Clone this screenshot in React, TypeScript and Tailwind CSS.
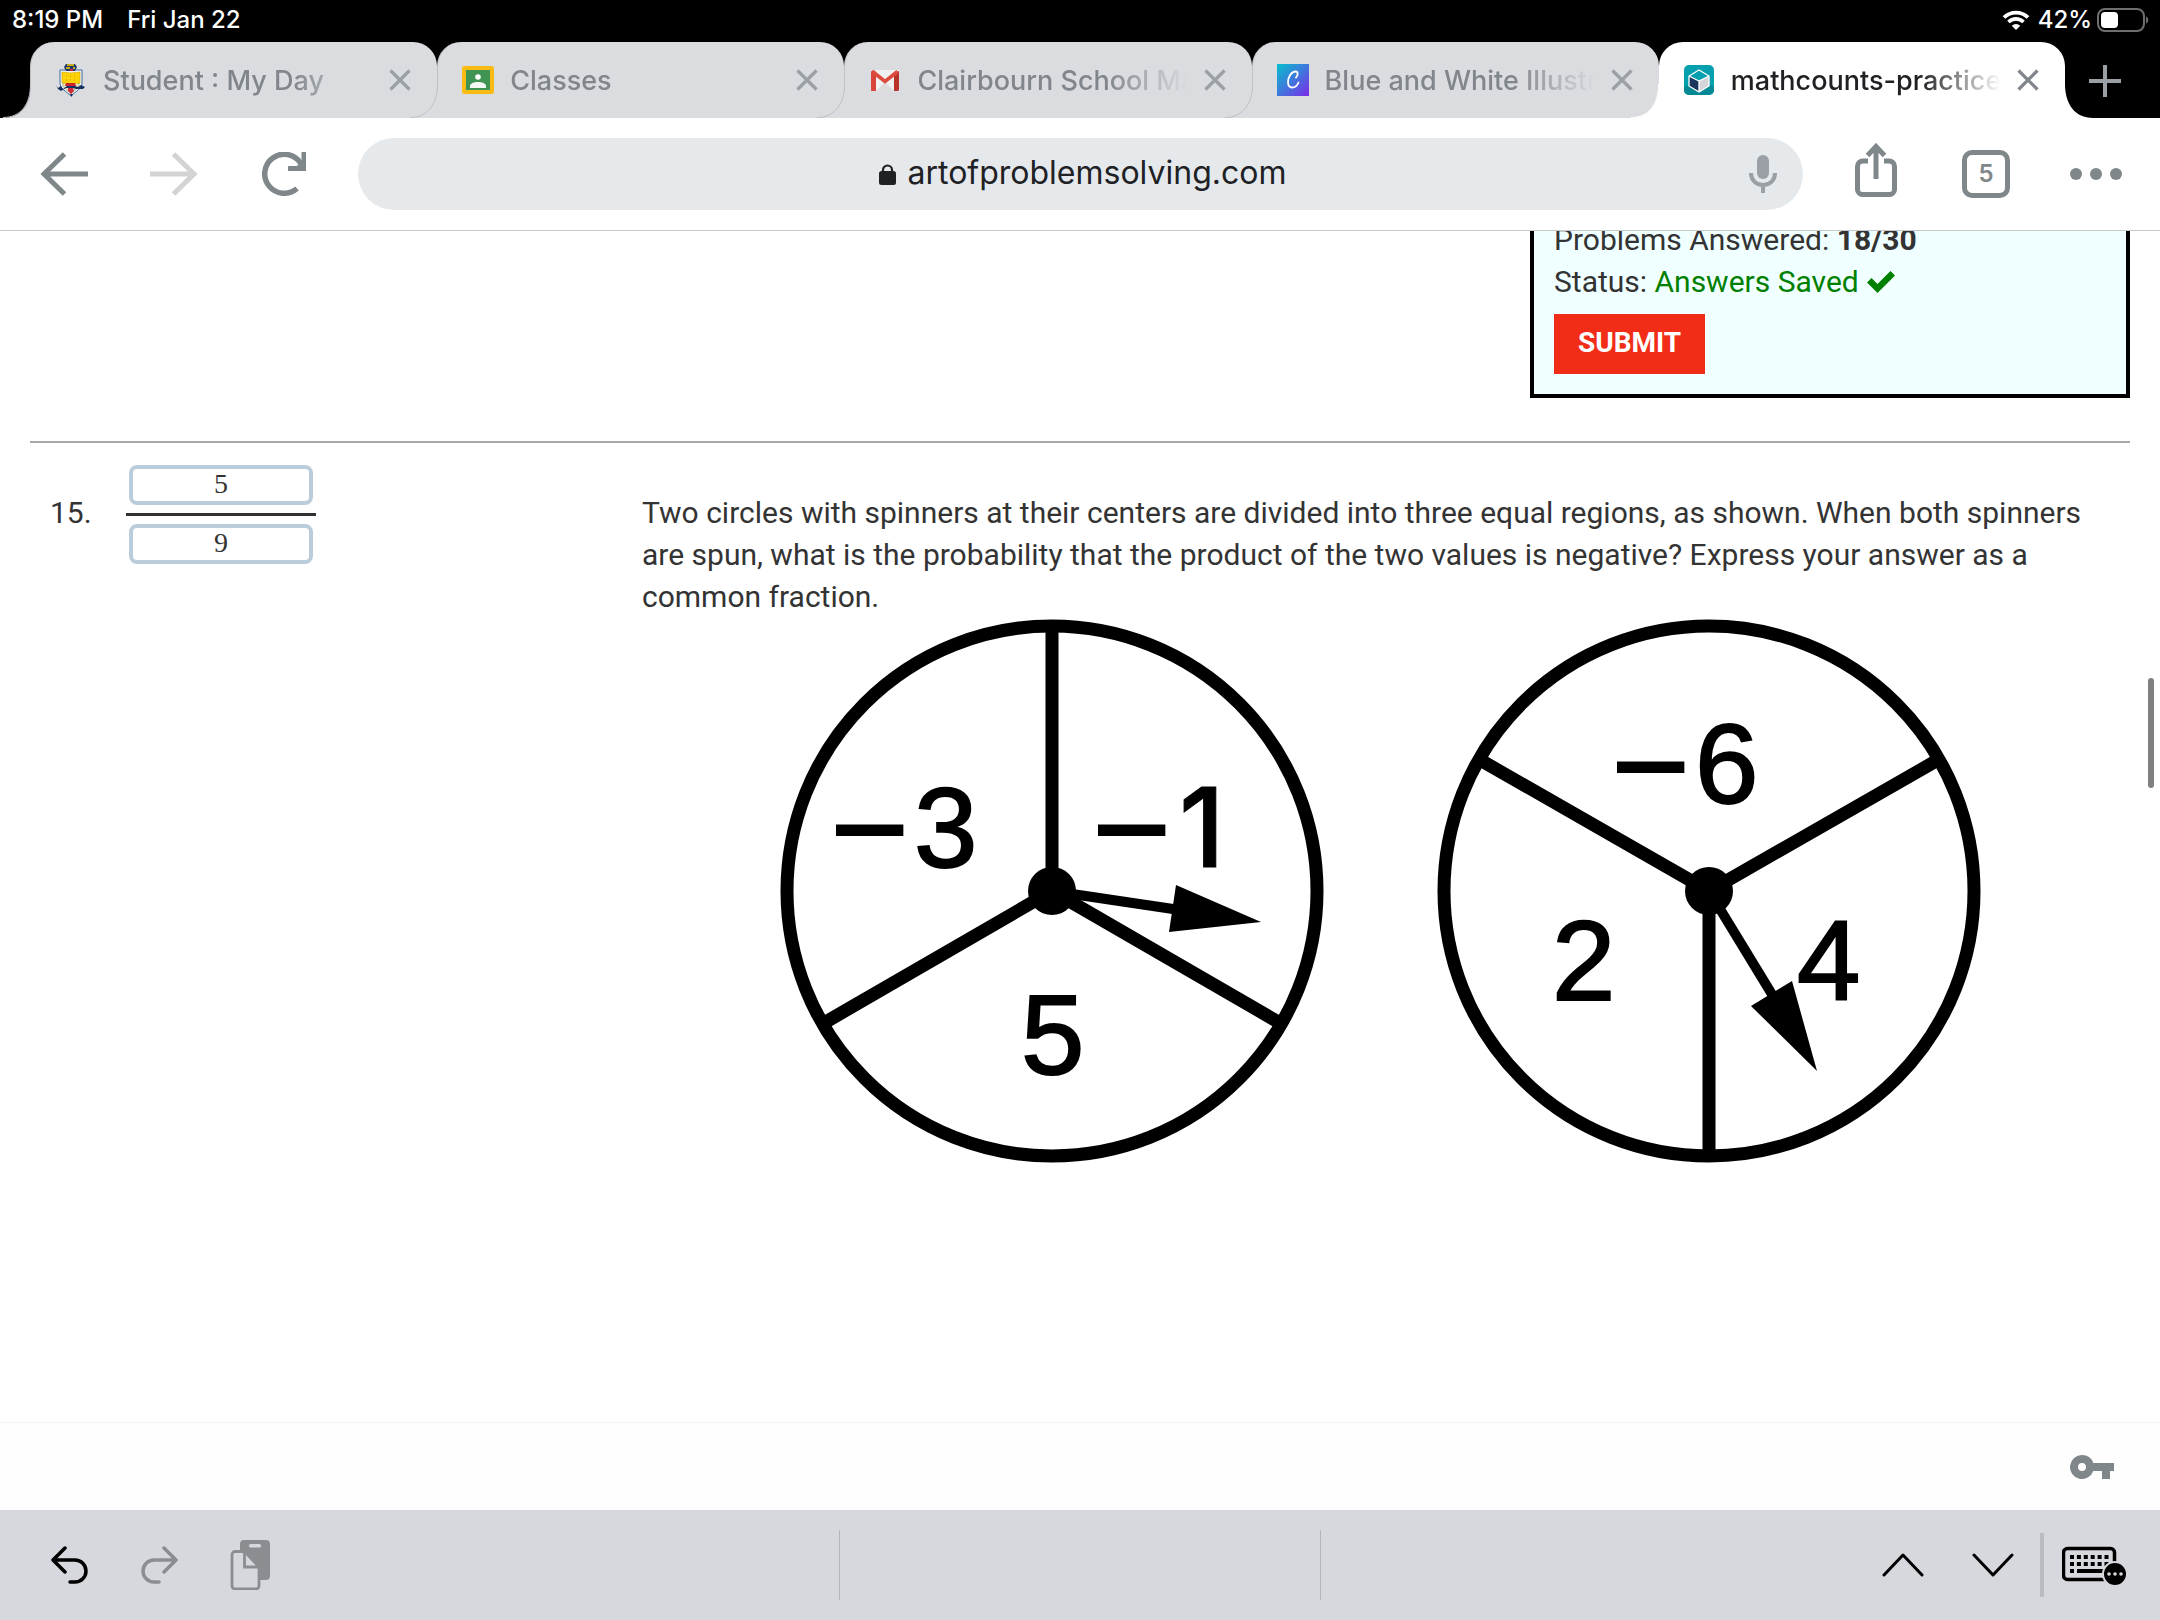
import type { ReactNode } from "react";

const ui = "font-['Inter',sans-serif]";
const body = "font-['Roboto',sans-serif]";

function CrestIcon() {
  return (
    <svg viewBox="9 8 32 34" className="h-[34px] w-8 shrink-0" aria-hidden="true">
      <path d="M14 15h22v13c0 6-6 8-11 13-5-5-11-7-11-13z" fill="#f2f4f6" stroke="#3d6a9e" />
      <path d="M17 27h16v4c-2 3-5 5-8 8-3-3-6-5-8-8z" fill="#dfe3c8" stroke="#8aa36a" strokeWidth="0.6" />
      <path d="M16 17l9 1 9-1v11l-9 1-9-1z" fill="#fcd305" stroke="#d8a100" strokeWidth="0.6" />
      <path d="M20 21h1M24 21h1M28 21h1M20 25h1M24 25h1M28 25h1" stroke="#e08a00" />
      <path d="M20 9h9l2 3-2 4h-9l-2-4z" fill="#1f3769" />
      <path d="M21 10h7M20 13h4M27 13h2" stroke="#fcd305" strokeWidth="1.4" />
      <path d="M24 14h3v2h-3z" fill="#cf2030" />
      <path d="M20 28h9l1 3H19z" fill="#cf2030" />
      <path d="M10 30l2 3 3-2 2 3 4-3h8l3 1 3-2 4 2-2 2h-7l-3-1h-7l-5 3-3-2z" fill="#16305f" />
      <path d="M22 33h5l1 3-3 3-3-3z" fill="#d42a3c" />
      <path d="M24 39h3l-1.500 3z" fill="#16305f" />
    </svg>
  );
}

function ClassroomIcon() {
  return (
    <svg viewBox="0 0 32 28" className="h-7 w-8 shrink-0" aria-hidden="true">
      <rect width="32" height="28" rx="2" fill="#f9bb14" />
      <rect x="4" y="4" width="24" height="20" fill="#3f9353" />
      <circle cx="16" cy="11" r="2.800" fill="#fff" />
      <path d="M8 22v-2c0-2.500 4-4 8-4s8 1.500 8 4v2z" fill="#f4f8f4" />
    </svg>
  );
}

function GmailIcon() {
  return (
    <svg viewBox="0 0 32 24" className="h-6 w-8 shrink-0" aria-hidden="true">
      <path d="M2 2h28v21H2z" fill="#f1f1f1" />
      <path d="M16 14l-9 9h18z" fill="#dcdcdc" />
      <path d="M4 3v20H3.500A1.500 1.500 0 0 1 2 21.500V3.500L4 2l3 2v19H2z" fill="#d9453b" />
      <path d="M25 5l5-2v18.500a1.500 1.500 0 0 1-1.500 1.500H25z" fill="#b93428" />
      <path d="M3.500 3.500L16 13.500 28.500 3.500" fill="none" stroke="#dd4b3e" strokeWidth="3.600" />
    </svg>
  );
}

function CanvaIcon() {
  return (
    <svg viewBox="0 0 32 32" className="size-8 shrink-0" aria-hidden="true">
      <defs>
        <linearGradient id="canva" x1="0" y1="0" x2="1" y2="1">
          <stop offset="0" stopColor="#06bfcb" />
          <stop offset="0.500" stopColor="#3f78dd" />
          <stop offset="1" stopColor="#7d2ae8" />
        </linearGradient>
      </defs>
      <rect width="32" height="32" fill="url(#canva)" />
      <path
        d="M19 13.500c2-2 2.500-6-.5-6-4 0-7.500 5.500-7.500 10.500 0 3.500 1.800 5.500 4.200 5.500 3 0 5.300-2.500 6.300-5"
        fill="none"
        stroke="#fff"
        strokeWidth="1.800"
        strokeLinecap="round"
      />
    </svg>
  );
}

function CubeIcon() {
  return (
    <svg viewBox="0 0 32 32" className="size-8 shrink-0" aria-hidden="true">
      <rect x="1" y="1" width="30" height="30" rx="5" fill="#04a0ae" />
      <path d="M1 23c4-2 8-3 15-3s11 1 15 3v3a5 5 0 0 1-5 5H6a5 5 0 0 1-5-5z" fill="#068994" />
      <path d="M16 6l10 6v10l-10 6-10-6V12z" fill="#04a0ae" />
      <path d="M6 12l10 5v11L6 22z" fill="#1b365d" />
      <path d="M26 12l-10 5v11l10-6z" fill="#d3d5d9" />
      <path d="M16 6l10 6v10l-10 6-10-6V12zM6 12l10 5 10-5M16 17v11" fill="none" stroke="#fff" strokeWidth="1.300" />
    </svg>
  );
}

type Tab = { title: string; icon: ReactNode; active?: boolean };

const tabs: Tab[] = [
  { title: "Student : My Day", icon: <CrestIcon /> },
  { title: "Classes", icon: <ClassroomIcon /> },
  { title: "Clairbourn School Mail", icon: <GmailIcon /> },
  { title: "Blue and White Illustrated", icon: <CanvaIcon /> },
  { title: "mathcounts-practice", icon: <CubeIcon />, active: true },
];

function BrowserTab({ title, icon, active }: Tab) {
  const fill = active ? "fill-white" : "fill-[#dadce0]";
  return (
    <div
      className={
        active
          ? "relative flex min-w-0 flex-1 items-center rounded-t-3xl bg-white pr-[26px] pl-6"
          : "relative flex min-w-0 flex-1 items-center rounded-t-3xl border-l border-[#bfc1c5] bg-[#dadce0] pr-[26px] pl-6"
      }
    >
      <svg viewBox="0 0 28 34" className="absolute right-full bottom-0 h-[34px] w-7" aria-hidden="true">
        <path d="M0 34C18 34 28 20 28 0V34z" className={fill} />
        <path d="M0 33.500C18 33.500 27.500 20 27.500 0" fill="none" stroke={active ? "#fff" : "#bfc1c5"} />
      </svg>
      {icon}
      <a
        href="#tab"
        className={
          active
            ? "ml-4 min-w-0 flex-1 overflow-hidden pt-0.5 text-[27px] leading-8 font-medium whitespace-nowrap text-[#202124] [mask-image:linear-gradient(to_right,black_70%,transparent)]"
            : "ml-4 min-w-0 flex-1 overflow-hidden pt-0.5 text-[27px] leading-8 font-medium whitespace-nowrap text-[#80868b] [mask-image:linear-gradient(to_right,black_70%,transparent)]"
        }
      >
        {title}
      </a>
      <button
        aria-label="Close tab"
        className={active ? "ml-4 shrink-0 text-[#80868b]" : "ml-4 shrink-0 text-[#9aa0a6]"}
      >
        <svg viewBox="0 0 22 22" className="size-[22px]" fill="none" stroke="currentColor" strokeWidth="3.200">
          <path d="M1.500 1.500l19 19M20.500 1.500l-19 19" />
        </svg>
      </button>
      {active && (
        <svg viewBox="0 0 28 34" className="absolute bottom-0 left-full h-[34px] w-7" aria-hidden="true">
          <path d="M28 34C10 34 0 20 0 0V34z" fill="#fff" />
        </svg>
      )}
    </div>
  );
}

function StatusBar() {
  return (
    <div className="flex h-[42px] items-center pr-2.5 pb-0.5 pl-3 text-2xl leading-8 font-medium text-white">
      <span>8:19 PM</span>
      <span className="ml-6 flex-1">Fri Jan 22</span>
      <svg viewBox="0 0 28 22" className="h-[22px] w-7" aria-label="Wi-Fi" fill="none" stroke="#fff">
        <path d="M2 8.500a17 17 0 0 1 24 0" strokeWidth="3.800" />
        <path d="M6.500 13a10.600 10.600 0 0 1 15 0" strokeWidth="3.600" />
        <path d="M14 21l-4.200-4.300a6 6 0 0 1 8.400 0z" fill="#fff" stroke="none" />
      </svg>
      <span className="ml-2">42%</span>
      <svg viewBox="0 0 54 26" className="ml-1 h-[26px] w-[54px]" aria-label="Battery">
        <rect x="2" y="2" width="46" height="22" rx="7" fill="none" stroke="#6e6e6e" strokeWidth="2" />
        <rect x="5" y="5" width="17" height="16" rx="4" fill="#fff" />
        <path d="M50 9.500c3 1 3 6 0 7z" fill="#6e6e6e" />
      </svg>
    </div>
  );
}

function Toolbar() {
  return (
    <div className="flex h-[113px] shrink-0 items-center border-b border-[#c6c8ca] bg-white pr-[38px] pl-10 text-[#7f878b]">
      <button aria-label="Back">
        <svg viewBox="0 0 48 44" className="h-11 w-12" fill="none" stroke="currentColor" strokeWidth="5">
          <path d="M48 22H4M24.500 2L4 22l20.500 20" />
        </svg>
      </button>
      <button aria-label="Forward" className="ml-[62px] text-[#d3d3d3]">
        <svg viewBox="0 0 48 44" className="h-11 w-12" fill="none" stroke="currentColor" strokeWidth="5">
          <path d="M0 22h44M23.500 2L44 22 23.500 42" />
        </svg>
      </button>
      <button aria-label="Reload" className="ml-16">
        <svg viewBox="0 0 44 44" className="size-11" fill="none" stroke="currentColor" strokeWidth="5.500">
          <path d="M35 36.500A19.500 19.500 0 1 1 38.500 11" />
          <path d="M44 0v19H26v-5h9l4.500-6V0z" fill="currentColor" stroke="none" />
        </svg>
      </button>
      <div className="ml-[52px] flex h-[72px] flex-1 items-center rounded-full bg-[#e5e9ec] pr-[26px] pl-[58px]">
        <div className="flex flex-1 items-center justify-center gap-3">
          <svg viewBox="0 0 17 21" className="h-[21px] w-[17px]" aria-hidden="true">
            <rect y="7" width="17" height="14" rx="2.500" fill="#202124" />
            <path d="M4 9V6a4.500 4.500 0 0 1 9 0v3" fill="none" stroke="#202124" strokeWidth="2.200" />
          </svg>
          <input
            aria-label="Address"
            defaultValue="artofproblemsolving.com"
            className="field-sizing-content bg-transparent pb-0.5 text-[32px] leading-10 text-[#202124] outline-none"
          />
        </div>
        <button aria-label="Voice search" className="text-[#9aa0a6]">
          <svg viewBox="0 0 28 38" className="h-[38px] w-7" fill="none" stroke="currentColor" strokeWidth="4">
            <rect x="8" width="12" height="24" rx="6" fill="currentColor" stroke="none" />
            <path d="M2 18c0 7 5 12 12 12s12-5 12-12M14 29v9" />
          </svg>
        </button>
      </div>
      <button aria-label="Share" className="ml-[52px] -mt-2">
        <svg viewBox="0 0 42 54" className="h-[54px] w-[42px]" fill="none" stroke="currentColor" strokeWidth="5">
          <path d="M13 18H8a5.500 5.500 0 0 0-5.500 5.500v23A5 5 0 0 0 7.500 51.500h27a5 5 0 0 0 5-5v-23A5.500 5.500 0 0 0 34 18h-5M21 36V4M12.500 12.500L21 3.500l8.500 9" />
        </svg>
      </button>
      <button
        aria-label="Open tabs"
        className="ml-[65px] flex size-12 items-center justify-center rounded-[10px] border-[5px] border-[#7f878b] text-2xl font-semibold"
      >
        5
      </button>
      <button aria-label="More" className="ml-[60px]">
        <svg viewBox="0 0 52 12" className="h-3 w-[52px]" fill="currentColor">
          <circle cx="6" cy="6" r="6" />
          <circle cx="26" cy="6" r="6" />
          <circle cx="46" cy="6" r="6" />
        </svg>
      </button>
    </div>
  );
}

function Digit({ x, y, children }: { x: number; y: number; children: string }) {
  return (
    <tspan x={x} y={y} className="font-['Liberation_Sans',sans-serif]">
      {children}
    </tspan>
  );
}

function Spinners() {
  return (
    <svg
      viewBox="780 619 1204 545"
      className="mt-px ml-[138px] h-[545px] w-[1204px]"
      role="img"
      aria-label="Two spinners"
      stroke="#000"
      strokeWidth="13"
    >
      <circle cx="1052" cy="891" r="265" fill="none" />
      <path d="M1052 626v265M1052 891L824 1023M1052 891l228 132" />
      <circle cx="1052" cy="891" r="24" stroke="none" />
      <path d="M1052 891l121 18" strokeWidth="10" />
      <path d="M1176 885l85 37-92 10z" stroke="none" />
      <circle cx="1709" cy="891" r="265" fill="none" />
      <path d="M1709 891v265M1709 891L1482 761M1709 891l227-130" />
      <circle cx="1709" cy="891" r="24" stroke="none" />
      <path d="M1709 891l64 105" strokeWidth="10" />
      <path d="M1792 981l25 90-66-65z" stroke="none" />
      <g fontSize="114" strokeWidth="2">
        <text>
          <tspan strokeWidth="4"><Digit x={838} y={859}>–</Digit></tspan>
          <Digit x={914} y={867}>3</Digit>
        </text>
        <text>
          <tspan strokeWidth="4"><Digit x={1100} y={859}>–</Digit></tspan>
          <tspan x={1179} y={867} fontSize="110" className="font-['Inter',sans-serif] font-medium" strokeWidth="1">
            1
          </tspan>
        </text>
        <text>
          <Digit x={1021} y={1074}>5</Digit>
        </text>
        <text>
          <tspan strokeWidth="4"><Digit x={1619} y={796}>–</Digit></tspan>
          <Digit x={1695} y={803}>6</Digit>
        </text>
        <text>
          <Digit x={1552} y={1000}>2</Digit>
        </text>
        <text>
          <Digit x={1797} y={1000}>4</Digit>
        </text>
      </g>
    </svg>
  );
}

const answerBox =
  "h-10 w-[184px] rounded-lg border-4 border-[#bbccdb] bg-white pb-0.5 text-center font-['Liberation_Serif',serif] text-[28px] leading-7 text-[#333] outline-none";

function Page() {
  return (
    <main className={`${body} relative min-h-0 flex-1 overflow-hidden px-[30px] text-[30px] leading-[42px] text-[#333]`}>
      <section className="-mt-3 ml-auto w-[600px] border-4 border-t-0 border-black bg-[#f0ffff] px-5 pb-5">
        <p>
          Problems Answered: <b>18/30</b>
        </p>
        <p>
          Status:{" "}
          <span className="text-[#008000]">
            Answers Saved
            <svg viewBox="0 0 28 24" className="ml-2 inline-block h-6 w-7 align-[-2px]" aria-hidden="true">
              <path d="M0 12.500L4.500 8l6 6L23.500 1 28 5.500 10.500 23z" fill="#008000" />
            </svg>
          </span>
        </p>
        <button className="mt-[11px] block h-[60px] bg-[#f12c17] px-6 pb-0.5 text-[28px] font-bold text-white">
          SUBMIT
        </button>
      </section>
      <hr className="mt-[43px] border-t-2 border-[#a9a9a9]" />
      <article className="flex items-start">
        <div className="flex w-[612px] shrink-0 items-start">
          <span className="mt-[49px] w-24 pl-5">15.</span>
          <div className="mt-[22px] flex flex-col items-center">
            <input aria-label="Numerator" defaultValue="5" className={answerBox} />
            <div className="my-2 h-[3px] w-[190px] bg-[#333]" />
            <input aria-label="Denominator" defaultValue="9" className={answerBox} />
          </div>
        </div>
        <div className="mt-[49px] min-w-0 flex-1 pr-5">
          <p>
            Two circles with spinners at their centers are divided into three equal regions, as shown. When both
            spinners are spun, what is the probability that the product of the two values is negative? Express your
            answer as a common fraction.
          </p>
          <Spinners />
        </div>
      </article>
      <div className="absolute top-[447px] right-1.5 h-[110px] w-1.5 rounded-full bg-[#808080]" />
    </main>
  );
}

function PasswordBar() {
  return (
    <div className="flex h-[88px] shrink-0 items-center justify-end border-t border-[#f3f4f4] bg-[#fefefe] pr-[46px]">
      <button aria-label="Passwords">
        <svg viewBox="0 0 44 24" className="h-6 w-11" fill="#7f878b">
          <path
            fillRule="evenodd"
            d="M12 0a12 12 0 0 1 11.300 8H44v8h-4v8h-8v-8h-8.700A12 12 0 1 1 12 0zm0 8a4 4 0 1 0 0 8 4 4 0 0 0 0-8z"
          />
        </svg>
      </button>
    </div>
  );
}

function KeyboardBar() {
  return (
    <div className="flex h-[110px] shrink-0 items-center bg-[#d6d8dd] px-8">
      <div className="flex flex-1 items-center">
        <button aria-label="Undo" className="ml-[18px]">
          <svg viewBox="0 0 38 38" className="size-[38px]" fill="none" stroke="#000" strokeWidth="3.500" strokeLinecap="round" strokeLinejoin="round">
            <path d="M15 2L3 14l12 12M3 14h22a11 11 0 0 1 0 22h-5" />
          </svg>
        </button>
        <button aria-label="Redo" className="ml-[52px]">
          <svg viewBox="0 0 38 38" className="size-[38px]" fill="none" stroke="#8b8e91" strokeWidth="3.500" strokeLinecap="round" strokeLinejoin="round">
            <path d="M24 2l12 12-12 12M36 14H14a11 11 0 0 0 0 22h5" />
          </svg>
        </button>
        <button aria-label="Paste" className="ml-[52px]">
          <svg viewBox="0 0 40 50" className="h-[50px] w-10">
            <rect x="10" y="0" width="30" height="40" rx="4" fill="#8b8e91" />
            <rect x="19" y="4" width="12" height="3.500" rx="1.500" fill="#d6d8dd" />
            <path d="M5 11.500h9.500L29 27v19a3 3 0 0 1-3 3H5a3 3 0 0 1-3-3V14.500a3 3 0 0 1 3-3z" fill="#d6d8dd" stroke="#8b8e91" strokeWidth="2.800" />
            <path d="M14.500 12v15H29" fill="none" stroke="#8b8e91" strokeWidth="2.800" />
          </svg>
        </button>
      </div>
      <div className="h-[70px] w-[482px] border-x border-[#b4b6ba]" />
      <div className="flex flex-1 items-center justify-end">
        <button aria-label="Previous field">
          <svg viewBox="0 0 42 24" className="h-6 w-[42px]" fill="none" stroke="#000" strokeWidth="3" strokeLinecap="round" strokeLinejoin="round">
            <path d="M2 22L21 2l19 20" />
          </svg>
        </button>
        <button aria-label="Next field" className="ml-12">
          <svg viewBox="0 0 42 24" className="h-6 w-[42px]" fill="none" stroke="#000" strokeWidth="3" strokeLinecap="round" strokeLinejoin="round">
            <path d="M2 2l19 20L40 2" />
          </svg>
        </button>
        <div className="ml-[26px] h-16 w-1 bg-[#bbbcbf]" />
        <button aria-label="Hide keyboard" className="ml-[18px]">
          <svg viewBox="0 0 66 40" className="h-10 w-[66px]">
            <rect x="1.500" y="3.500" width="51" height="31" rx="4" fill="none" stroke="#000" strokeWidth="3.500" />
            <path
              d="M8 12h40M8 19h40"
              stroke="#000"
              strokeWidth="4"
              strokeDasharray="4 2.900"
            />
            <path d="M8 26h4M15 26h28" stroke="#000" strokeWidth="4" />
            <circle cx="53" cy="29" r="13" fill="#d6d8dd" />
            <circle cx="53" cy="29" r="11" />
            <circle cx="47" cy="29" r="1.800" fill="#d6d8dd" />
            <circle cx="53" cy="29" r="1.800" fill="#d6d8dd" />
            <circle cx="59" cy="29" r="1.800" fill="#d6d8dd" />
          </svg>
        </button>
      </div>
    </div>
  );
}

export default function App() {
  return (
    <div className={`${ui} flex h-screen flex-col bg-white`}>
      <header className="shrink-0 bg-black">
        <StatusBar />
        <div className="flex h-[76px] pl-[30px]">
          {tabs.map((tab) => (
            <BrowserTab key={tab.title} {...tab} />
          ))}
          <button aria-label="New tab" className="flex w-[95px] shrink-0 items-center pl-6 text-[#9aa0a6]">
            <svg viewBox="0 0 32 32" className="mt-0.5 size-8" stroke="currentColor" strokeWidth="4">
              <path d="M16 0v32M0 16h32" />
            </svg>
          </button>
        </div>
      </header>
      <Toolbar />
      <Page />
      <PasswordBar />
      <KeyboardBar />
    </div>
  );
}
